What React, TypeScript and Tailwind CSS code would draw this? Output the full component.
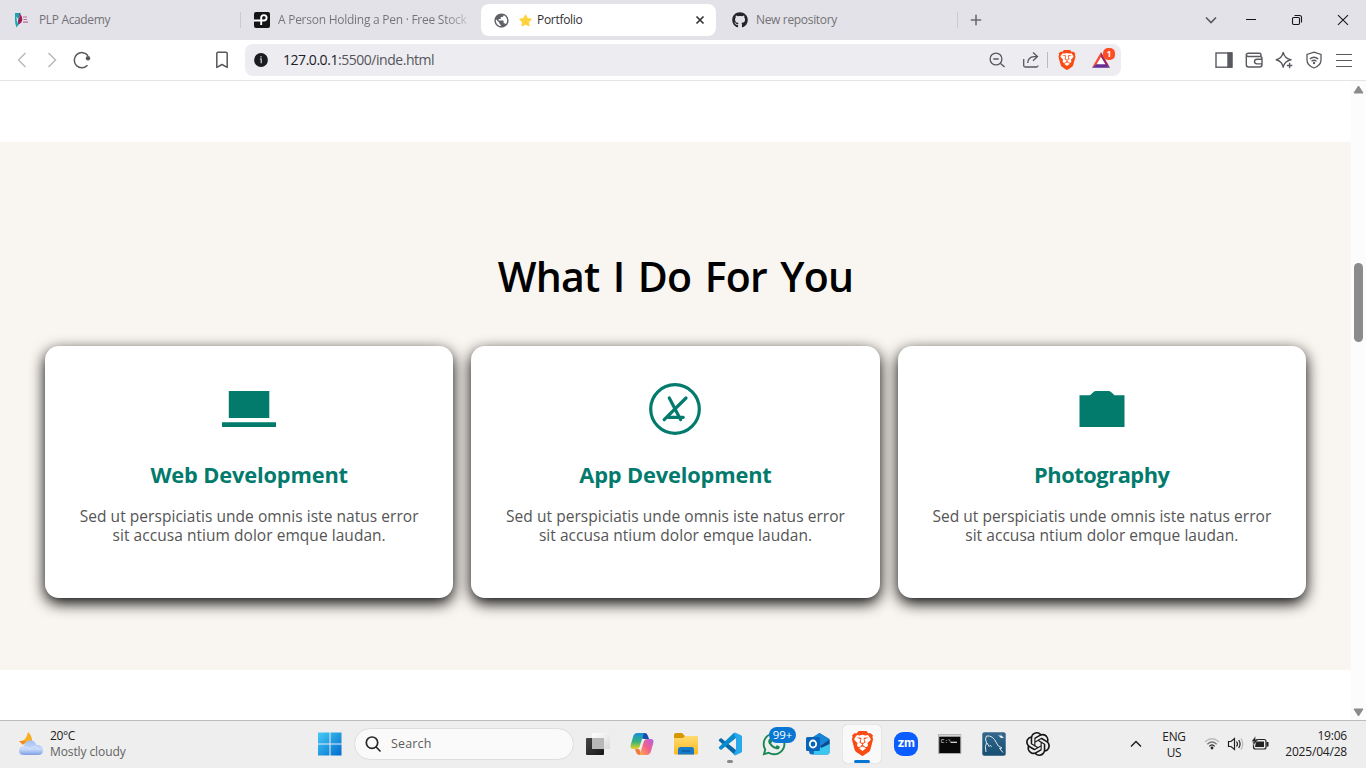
import React from "react";
import { SiBrave, SiOpenai } from "react-icons/si";
import { FaGithub, FaWhatsapp } from "react-icons/fa";
import { MdPublic } from "react-icons/md";

function PlpIcon() {
  return (
    <svg className="h-4 w-4 shrink-0" viewBox="0 0 16 16">
      <path d="M1 1H7L5 4V12L2.5 15.5Q1 12 1 8Z" fill="#18a5ad" />
      <path d="M5 1Q9 4 8 9Q7 12 4.5 12.5L4 8Q6 7 5 1Z" fill="#a31853" />
      <path d="M2.4 4.5L4.3 7L3.2 12Z" fill="#dceef0" />
      <path d="M9 5H13M9.5 7.5H13M9 10.2H14" stroke="#bb6f94" strokeWidth="1.2" />
    </svg>
  );
}

function PexelsIcon() {
  return (
    <svg className="h-4 w-4 shrink-0" viewBox="0 0 16 16">
      <rect width="16" height="16" rx="2" fill="#151518" />
      <path d="M7.2 13V5.8A2.7 2.7 0 1 1 9.9 8.5H0" fill="none" stroke="#fff" strokeWidth="1.9" />
    </svg>
  );
}

function TabBar() {
  return (
    <header className="flex h-10 shrink-0 items-center bg-[#e3e2e8] text-[12px] text-[#737276]">
      <div className="flex h-4 w-[241px] items-center gap-[9px] border-r border-[#cbcad0] pl-[14px]">
        <PlpIcon />
        <span className="whitespace-nowrap tracking-[-0.35px]">PLP Academy</span>
      </div>
      <div className="flex w-[240px] items-center gap-2 pl-[13px]">
        <PexelsIcon />
        <span className="w-[190px] overflow-hidden whitespace-nowrap bg-gradient-to-r from-[#737276] from-88% to-[#c8c7cd] bg-clip-text tracking-[-0.26px] text-transparent">A Person Holding a Pen · Free Stock</span>
      </div>
      <div className="flex h-8 w-[235px] items-center rounded-lg bg-white pl-3 pr-[10px] text-[#303033]">
        <MdPublic className="size-[17px] text-[#5f6167]" />
        <svg className="ml-[9px] size-[13px]" viewBox="0 0 13 13"><path d="M6.5 1.2L8.2 4.6L12 5.2L9.3 7.9L9.9 11.7L6.5 10L3.1 11.7L3.7 7.9L1 5.2L4.8 4.6Z" fill="#ffd23c" stroke="#ffd23c" strokeWidth="1.3" strokeLinejoin="round" /></svg>
        <span className="ml-[5px] flex-1 tracking-[-0.3px]">Portfolio</span>
        <svg className="size-3" viewBox="0 0 12 12" stroke="#333338" strokeWidth="1.7"><path d="M2.5 2.5L9.5 9.5M9.5 2.5L2.5 9.5" /></svg>
      </div>
      <div className="flex h-4 w-[242px] items-center gap-2 border-r border-[#cbcad0] pl-4">
        <FaGithub className="size-4 text-[#24242a]" />
        <span className="tracking-[-0.33px]">New repository</span>
      </div>
      <svg className="ml-3 size-3" viewBox="0 0 12 12" stroke="#6b6b70" strokeWidth="1.6"><path d="M6 .8V11.2M.8 6H11.2" /></svg>
      <svg className="ml-auto h-10 w-[166px]" viewBox="1200 0 166 40" fill="none">
        <path d="M1206 17.5L1211 22.5L1216 17.5" stroke="#5b5b60" strokeWidth="1.7" />
        <path d="M1246 19.5H1256M1338 15.2L1348 24.8M1348 15.2L1338 24.8" stroke="#161618" strokeWidth="1.1" />
        <rect x="1292.5" y="17.5" width="7" height="7" rx="1.2" stroke="#161618" strokeWidth="1.1" />
        <path d="M1294.5 15.5H1299.5Q1301.5 15.5 1301.5 17.5V22.5" stroke="#161618" strokeWidth="1.1" />
      </svg>
    </header>
  );
}

function BraveIcon({ className }: { className: string }) {
  return (
    <svg className={className} viewBox="0 0 24 24">
      <path d="M6 3H18L20 8L19 16L12 22L5 16L4 8Z" fill="#fff" />
      <SiBrave size={24} color="#fb4b14" />
    </svg>
  );
}

function Toolbar() {
  return (
    <div className="flex h-[41px] shrink-0 items-center border-b border-[#e4e3e8] bg-white">
      <svg className="h-10 w-[245px]" viewBox="0 40 245 40" fill="none">
        <path d="M25.5 53L18.5 60L25.5 67M48.5 53L55.5 60L48.5 67" stroke="#bababd" strokeWidth="1.5" />
        <path d="M88 55.7A7.6 7.6 0 1 0 87.5 65.3" stroke="#56585e" strokeWidth="1.5" />
        <circle cx="88" cy="58.3" r="2.2" fill="#56585e" />
        <path d="M216.8 53.5Q216.8 52.3 218 52.3H226Q227.2 52.3 227.2 53.5V67.4L222 64.5L216.8 67.4Z" stroke="#56585e" strokeWidth="1.5" strokeLinejoin="round" />
      </svg>
      <div className="flex h-8 w-[876px] items-center rounded-lg bg-[#edecf1]">
        <svg className="ml-2 size-4" viewBox="0 0 16 16"><circle cx="8" cy="8" r="6.9" fill="#1b1b22" /><path d="M6.8 7H8.2V11.3M7.3 4.8H8.7" stroke="#d8d8de" strokeWidth="1.2" fill="none" /></svg>
        <span className="ml-[14px] flex-1 pb-px text-[14px] tracking-[-0.46px] text-[#55555b]"><span className="text-[#202026]">127.0.0.1</span>:5500/inde.html</span>
        <div className="relative h-8 w-[136px]">
          <svg className="h-8 w-[136px]" viewBox="985 44 136 32" fill="none" stroke="#56585e" strokeWidth="1.3">
            <circle cx="996" cy="59" r="5.9" /><path d="M1000.2 63.2L1004.6 67M993.3 59H998.7" />
            <path d="M1023.7 59V65.5Q1023.7 67 1025.2 67H1036.5Q1038 67 1038 65.5M1033 52.5L1037.5 56.6L1033 60.7M1037 56.6H1034Q1028 57 1027.7 63" />
            <path d="M1047.5 52V68" stroke="#b9b9bf" strokeWidth="1" />
            <path d="M1101 52L1092 67.8L1096.8 64.5L1101 57.5Z" fill="#f24b37" stroke="none" />
            <path d="M1101 52L1110 67.8L1105.2 64.5L1101 57.5Z" fill="#9b2462" stroke="none" />
            <path d="M1092 67.8L1096.8 64H1105.2L1110 67.8Z" fill="#652e92" stroke="none" />
            <path d="M1101 57L1105.3 64.3H1096.7Z" fill="#fff" stroke="none" />
          </svg>
          <BraveIcon className="absolute left-[72px] top-[6px] size-5" />
          <span className="absolute left-[118px] top-1 flex h-3 w-3 items-center justify-center rounded-[5px] bg-[#ff4d24] text-[8px] font-bold leading-none text-white">1</span>
        </div>
      </div>
      <svg className="ml-auto h-10 w-[166px]" viewBox="1200 40 166 40" fill="none" stroke="#585a60" strokeWidth="1.4">
        <rect x="1216" y="53" width="15.5" height="14.2" /><path d="M1228 53H1232V67H1228Z" fill="#585a60" />
        <path d="M1261 56V54.7Q1261 53.2 1259.5 53.2H1248.5Q1246.3 53.2 1246.3 55V64.5Q1246.3 67 1248.5 67H1259.5Q1262 67 1262 64.5V58.5Q1262 56.5 1260 56.5H1248.5Q1246.3 56.5 1246.3 54.8M1262 59.2H1257Q1254.5 59.2 1254.5 61.5T1257 63.9H1262" />
        <path d="M1283.2 52.4Q1284.5 58.4 1291 59.8Q1284.5 61.2 1283.2 67.2Q1281.9 61.2 1276.2 59.8Q1281.9 58.4 1283.2 52.4ZM1289.6 62.8V68.2M1286.9 65.5H1292.3" strokeLinejoin="round" />
        <path d="M1314 52.2L1321 54.5V60Q1321 65.5 1314 68Q1307 65.5 1307 60V54.5ZM1309.8 59Q1314 55.5 1318.2 59M1311.5 61.3Q1314 59.2 1316.5 61.3" strokeWidth="1.3" /><circle cx="1314" cy="63" r="1.2" fill="#585a60" stroke="none" />
        <path d="M1336 54.5H1352M1336 60.5H1352M1336 66.5H1352" strokeWidth="1.2" />
      </svg>
    </div>
  );
}

const LaptopIcon = () => (
  <svg width="56" height="52" viewBox="0 0 56 52" fill="#027a6c"><path d="M7.8 8H48.3V35H7.8ZM1 39.3H55V44H1Z" /></svg>
);
const AppIcon = () => (
  <svg width="52" height="52" viewBox="0 0 52 52" fill="none" stroke="#027a6c" strokeWidth="3.2" strokeLinecap="round">
    <circle cx="26" cy="26" r="24.3" /><path d="M20.3 15L31.7 36.7M37 15L15.2 36.7M19 34.3H34.2" />
  </svg>
);
const CameraIcon = () => (
  <svg width="46" height="52" viewBox="0 0 46 52"><path d="M.5 12.3H11L14.5 9Q15.5 8 17 8H29.5Q31 8 32 9L35.5 12.3H45.5V44H.5Z" fill="#027a6c" /></svg>
);

const services = [
  { title: "Web Development", icon: <LaptopIcon />, tracking: "tracking-[-0.15px]" },
  { title: "App Development", icon: <AppIcon />, tracking: "tracking-[-0.15px]" },
  { title: "Photography", icon: <CameraIcon />, tracking: "tracking-[-0.45px]" },
];

function PageView() {
  return (
    <div className="flex h-[639px] shrink-0 bg-white">
      <main className="w-[1351px] pt-[61px] font-['Open_Sans',sans-serif]">
        <section className="h-[528px] bg-[#f9f5f0] px-[45px] pt-[106px]">
          <h1 className="h-[98px] text-center text-[41px] font-[650] leading-[56px] tracking-[-0.75px] text-black [word-spacing:3.4px]">What I Do For You</h1>
          <div className="grid grid-cols-3 gap-[18px]">
            {services.map((s) => (
              <article key={s.title} className="flex h-[252px] flex-col items-center rounded-[14px] bg-white pt-[37px] text-center shadow-[0_5px_15px_#000]">
                {s.icon}
                <h2 className={`mt-[25px] text-[21.8px] font-bold leading-[30px] text-[#027a6c] ${s.tracking}`}>{s.title}</h2>
                <p className="mt-[17px] whitespace-nowrap text-[15.5px] leading-[19px] tracking-[0.045px] text-[#555]">Sed ut perspiciatis unde omnis iste natus error<br />sit accusa ntium dolor emque laudan.</p>
              </article>
            ))}
          </div>
        </section>
      </main>
      <aside className="flex w-[15px] flex-col items-center bg-[#fcfcfc]">
        <svg className="mt-[4px] h-[9px] w-[11px]" viewBox="0 0 11 9"><path d="M5.5 1L10 8H1Z" fill="#8b8b8b" stroke="#8b8b8b" strokeLinejoin="round" /></svg>
        <div className="mt-[169px] h-[79px] w-[9px] rounded-full bg-[#8b8b8b]" />
        <svg className="mb-[3px] mt-auto h-[9px] w-[11px]" viewBox="0 0 11 9"><path d="M1 1H10L5.5 8Z" fill="#8b8b8b" stroke="#8b8b8b" strokeLinejoin="round" /></svg>
      </aside>
    </div>
  );
}

const WeatherIcon = () => (
  <svg className="size-[26px]" viewBox="0 0 26 26">
    <defs><linearGradient id="cloud" x2="0" y2="1"><stop stopColor="#a2c1f3" /><stop offset=".6" stopColor="#c6d9f9" /><stop offset="1" stopColor="#7d9fe4" /></linearGradient></defs>
    <path d="M10 1Q15 5 14 13H7L1 10Q8 11 10 1Z" fill="#f6ae24" /><path d="M1 10L5 14L8 10Z" fill="#f28a21" />
    <path d="M6 24Q1 24 1 19.5Q1 15.5 6 15.2Q7 9.5 12.5 9.5Q17 9.5 18.3 13.7Q25 14 25 19Q25 24 20 24Z" fill="url(#cloud)" />
    <path d="M4 18Q8 14 12 18Q17 13 21 18" fill="none" stroke="#e4edff" strokeWidth="1" opacity=".6" />
  </svg>
);
const WindowsIcon = () => (
  <svg className="size-6" viewBox="0 0 24 24"><defs><linearGradient id="win" gradientUnits="userSpaceOnUse" x1="0" y1="0" x2="24" y2="24"><stop stopColor="#45ccf7" /><stop offset="1" stopColor="#0069cb" /></linearGradient></defs><path d="M0 .5H11.5V11.5H0ZM12.5 .5H23.5V11.5H12.5ZM0 12.5H11.5V23.5H0ZM12.5 12.5H23.5V23.5H12.5Z" fill="url(#win)" /></svg>
);
const TaskViewIcon = () => (
  <svg className="size-6" viewBox="0 0 24 24"><defs><linearGradient id="tv" x2="1" y2="1"><stop stopColor="#464646" /><stop offset="1" stopColor="#171717" /></linearGradient><linearGradient id="tw" x2="1" y2="1"><stop stopColor="#fff" /><stop offset="1" stopColor="#dadada" /></linearGradient></defs><rect y="6" width="18" height="17" rx="1" fill="url(#tv)" /><rect x="6" y="1" width="18" height="16" rx="1" fill="url(#tw)" /><path d="M6 6H18V17H6Z" fill="#b8b8b8" /></svg>
);
const CopilotIcon = () => (
  <svg className="size-6" viewBox="0 0 24 24">
    <defs><linearGradient id="cp1" x2="0" y2="1"><stop stopColor="#178edc" /><stop offset=".55" stopColor="#36b37b" /><stop offset="1" stopColor="#eed21d" /></linearGradient><linearGradient id="cp2" x1="1" x2="0" y2="1"><stop stopColor="#ae63e6" /><stop offset=".5" stopColor="#f2608b" /><stop offset="1" stopColor="#ffb141" /></linearGradient></defs>
    <path d="M12 1H15Q17 1 18 4L19 7H14Q12 7 11 5Z" fill="#144cb3" />
    <path d="M7.5 1H14L9.5 15Q8.5 17 6 17H3Q0 17 .7 13L3 5Q4 1 7.5 1Z" fill="url(#cp1)" />
    <path d="M5 17H9L12 23H9Q7 23 6 20Z" fill="#ee7942" />
    <path d="M16.5 23H9.5L14 9Q15 7 17.5 7H21Q24 7 23.3 11L21 19Q20 23 16.5 23Z" fill="url(#cp2)" />
  </svg>
);
const FolderIcon = () => (
  <svg className="size-6" viewBox="0 0 24 24"><defs><linearGradient id="fold" x2="0" y2="1"><stop stopColor="#ffdb70" /><stop offset="1" stopColor="#fbb922" /></linearGradient></defs><path d="M0 3Q0 1 2 1H8L11 4H22Q24 4 24 6V12H0Z" fill="#d69600" /><path d="M0 6H9L11 4H22.5Q24 4 24 5.5V21Q24 22.5 22.5 22.5H1.5Q0 22.5 0 21Z" fill="url(#fold)" /><path d="M4 22.5V17.5Q4 15 6.5 15H17.5Q20 15 20 17.5V22.5Z" fill="#167ac7" /><path d="M8 19H16" stroke="#0758a0" strokeWidth="1.3" /></svg>
);
const CodeIcon = () => (
  <svg className="size-6" viewBox="0 0 24 24"><path d="M1 7.5L3 6L18 18V23L15.7 22L.8 8.8Z" fill="#0869aa" /><path d="M1 16.5L3 18L18 6V1L15.7 1L.8 15.2Z" fill="#078ccd" /><path d="M17 .5L23 3.2Q24 3.8 24 5V19Q24 20.2 23 20.8L17 23.5L15.5 22.7L18 18V6L15.5 1.3Z" fill="#29a9ec" /></svg>
);
const OutlookIcon = () => (
  <svg className="size-6" viewBox="0 0 24 24"><path d="M3 8L13.5 1L23.5 7V20Q23.5 22.5 21 22.5H6Q3 22.5 3 19Z" fill="#126bc1" /><path d="M7 4.5L18 11L23.5 8V20Q23.5 22.5 21 22.5H8Z" fill="#39c6ef" /><path d="M7 5L13.5 1L23.5 7.5L14 14Z" fill="#1687d8" /><path d="M14 14L23.5 7.5V12L15 16Z" fill="#0d4992" /><rect x="0" y="5" width="14" height="14" rx="1.5" fill="#0863b9" /><ellipse cx="7" cy="12" rx="3.2" ry="3.5" fill="none" stroke="#fff" strokeWidth="1.8" /></svg>
);
const TerminalIcon = () => (
  <svg className="size-6" viewBox="0 0 24 24"><rect x=".8" y="2.5" width="22" height="19" fill="#090909" stroke="#aaa" /><path d="M1 3.7H23" stroke="#d4d4d4" strokeWidth="2" /><path d="M13 10.3H19" stroke="#e6e6e6" strokeWidth="1.2" /><text x="2.8" y="11" fill="#e6e6e6" fontSize="6" fontFamily="Liberation Mono">C:\</text></svg>
);
const MysqlIcon = () => (
  <svg className="size-6" viewBox="0 0 24 24"><defs><linearGradient id="sql" x2="0" y2="1"><stop stopColor="#34678b" /><stop offset="1" stopColor="#174e72" /></linearGradient></defs><rect x=".3" y=".3" width="23.4" height="23.4" rx="2" fill="url(#sql)" /><path d="M4 20Q2.5 14 4.5 11Q2.5 6.5 4.5 4Q11 3 14.5 11Q15.5 14.5 20 16L17.5 16.3L21 20.5M5 11L7.2 14.5Q8.2 12 9.6 14.8" fill="none" stroke="#dce8ef" strokeWidth="1" /><path d="M16 3L19 4L18 2L22 6L19 6Z" fill="#e4f1f8" /></svg>
);

function Taskbar() {
  return (
    <footer className="flex h-12 shrink-0 items-center border-t border-[#bdbdbd] bg-[#eee] pb-[2px] text-[12px] text-[#202020]">
      <div className="flex w-[318px] items-center gap-[6px] pl-[18px]">
        <WeatherIcon />
        <div className="text-[12px] leading-4 tracking-[-0.1px]"><div className="tracking-[-0.4px]">20°C</div><div className="text-[#626262]">Mostly cloudy</div></div>
      </div>
      <WindowsIcon />
      <div className="ml-[12px] mr-[12px] flex h-8 w-[220px] items-center gap-[10px] rounded-full border border-[#dddddd] bg-[#fafafa] pl-[10px] text-[#5d5d5d]">
        <svg className="size-4" viewBox="0 0 16 16" fill="none" stroke="#272727" strokeWidth="1.7" strokeLinecap="round"><circle cx="7" cy="6.7" r="5.7" /><path d="M11.2 11L15 15" /></svg>
        <span className="pt-[2px] text-[12.5px] tracking-[0.15px]">Search</span>
      </div>
      <div className="flex items-center gap-5">
        <TaskViewIcon /><CopilotIcon /><FolderIcon />
        <div className="relative"><CodeIcon /><span className="absolute -bottom-[7px] left-[9px] h-[3px] w-[6px] rounded-full bg-[#888]" /></div>
        <div className="relative size-6"><FaWhatsapp className="-ml-[1px] -mt-[1px] size-[26px] text-[#198754]" /><span className="absolute -top-[5px] left-[7px] flex h-4 w-[27px] items-center justify-center rounded-full bg-[#0876d2] text-[11.5px] text-white">99+</span></div>
        <OutlookIcon />
        <div className="relative -mx-[7px] flex h-[38px] w-[38px] items-center justify-center rounded bg-[#f9f9f9] shadow-[0_0_1px_#aaa]"><BraveIcon className="size-[25px]" /><span className="absolute bottom-0 h-[3px] w-4 rounded-full bg-[#0876d2]" /></div>
        <div className="flex size-6 items-center justify-center rounded-[9px] bg-[#0b5cff] pb-[2px] font-['Inter'] text-[12px] font-bold tracking-[-0.3px] text-white">zm</div>
        <TerminalIcon /><MysqlIcon /><SiOpenai className="size-6 text-[#161616]" />
      </div>
      <svg className="ml-[80px] size-3" viewBox="0 0 12 12" fill="none" stroke="#222" strokeWidth="1.5"><path d="M1 8.5L6 3.5L11 8.5" /></svg>
      <div className="ml-[17px] w-[30px] pt-px text-center text-[11.8px] leading-4 tracking-[-0.2px]">ENG<br />US</div>
      <svg className="ml-[14px] h-6 w-[66px]" viewBox="1203 732 66 24" fill="none" stroke="#222" strokeWidth="1.2">
        <path d="M1205 742Q1212 735.5 1219 742" stroke="#bbb" /><path d="M1207.3 744.2Q1212 739.8 1216.7 744.2" stroke="#777" /><path d="M1209.3 746.4Q1212 743.5 1214.7 746.4" /><circle cx="1212" cy="748" r="1.4" fill="#222" stroke="none" />
        <path d="M1228.5 741.5H1231L1234.5 738.5V749.5L1231 746.5H1228.5ZM1236.5 741.5Q1238.5 744 1236.5 746.5M1238.7 740Q1241.5 744 1238.7 748" /><path d="M1241 738.4Q1244.5 744 1241 749.6" stroke="#bbb" />
        <rect x="1253.5" y="739.5" width="12.5" height="9.5" rx="2" /><path d="M1256 741.5H1264V747H1255ZM1266.5 742H1268.5V746.5H1266.5Z" fill="#222" stroke="none" /><path d="M1255.5 736L1251.5 741.5H1254.2L1253 745.5L1258.3 740H1255.5Z" fill="#222" stroke="#eee" strokeWidth=".4" />
      </svg>
      <div className="ml-auto mr-[19px] text-right text-[12px] leading-4 tracking-[-0.2px]">19:06<br />2025/04/28</div>
    </footer>
  );
}

export default function App() {
  return (
    <div className="flex h-[768px] w-[1366px] flex-col overflow-hidden font-['Open_Sans','Noto_Sans',sans-serif]">
      <TabBar />
      <Toolbar />
      <PageView />
      <Taskbar />
    </div>
  );
}
